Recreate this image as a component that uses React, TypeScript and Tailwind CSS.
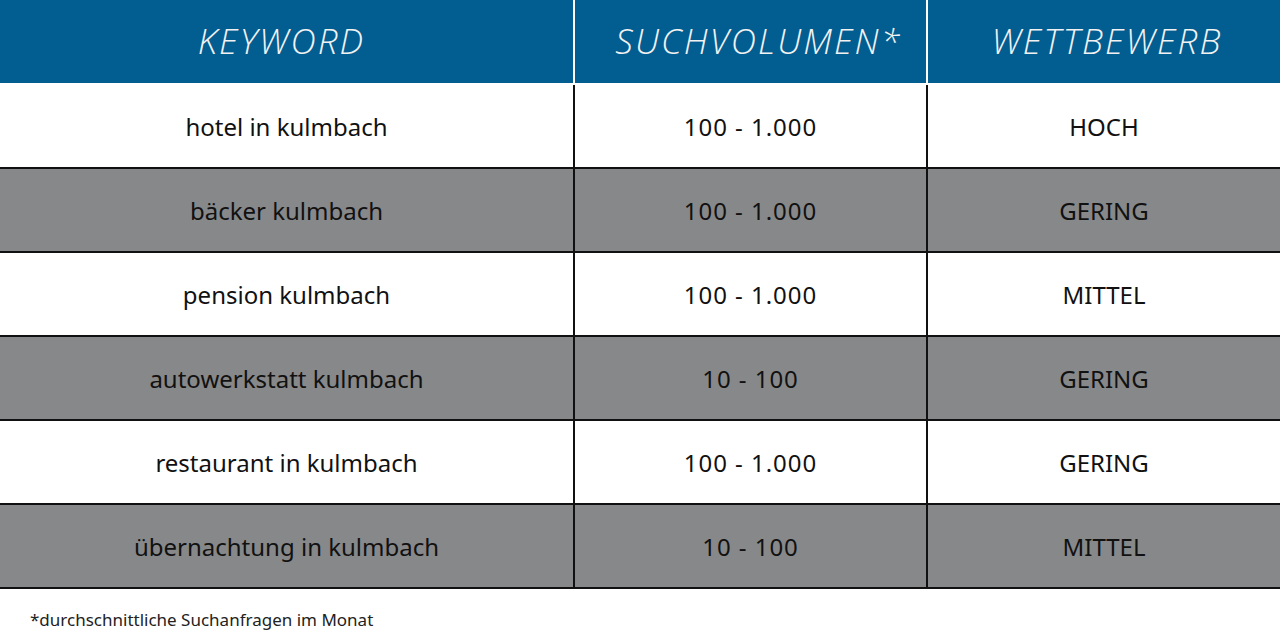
import React from "react";

const rows = [
  ["hotel in kulmbach", "100 - 1.000", "HOCH"],
  ["bäcker kulmbach", "100 - 1.000", "GERING"],
  ["pension kulmbach", "100 - 1.000", "MITTEL"],
  ["autowerkstatt kulmbach", "10 - 100", "GERING"],
  ["restaurant in kulmbach", "100 - 1.000", "GERING"],
  ["übernachtung in kulmbach", "10 - 100", "MITTEL"],
];

export default function App() {
  return (
    <div className="w-[1280px] h-[640px] bg-white overflow-hidden" style={{ fontFamily: '"Noto Sans", sans-serif' }}>
      <div className="grid grid-cols-[575px_353px_1fr] h-[83px] bg-[#025d91] text-[#f2f2f2] italic font-light text-[35px] tracking-[0.06em]" style={{ fontFamily: '"Open Sans", sans-serif' }}>
        <div className="flex items-center justify-center border-r-2 border-white pl-[4px] pr-[14px]">KEYWORD</div>
        <div className="flex items-center justify-center border-r-2 border-white pl-[16px]">SUCHVOLUMEN*</div>
        <div className="flex items-center justify-center pl-[6px]">WETTBEWERB</div>
      </div>
      <div className="mt-[2px]">
        {rows.map((r, i) => (
          <div
            key={i}
            className={`grid grid-cols-[575px_353px_1fr] h-[84px] border-b-2 border-[#111] text-[24px] text-[#111] ${i % 2 === 1 ? "bg-[#87888a]" : "bg-white"}`}
          >
            <div className="flex items-center justify-center border-r-2 border-[#111] pt-[2px]">{r[0]}</div>
            <div className="flex items-center justify-center border-r-2 border-[#111] pt-[2px] tracking-[0.04em]">{r[1]}</div>
            <div className="flex items-center justify-center pt-[2px]">{r[2]}</div>
          </div>
        ))}
      </div>
      <div className="pl-[30px] pt-[18px] text-[17px] text-[#222]">*durchschnittliche Suchanfragen im Monat</div>
    </div>
  );
}
